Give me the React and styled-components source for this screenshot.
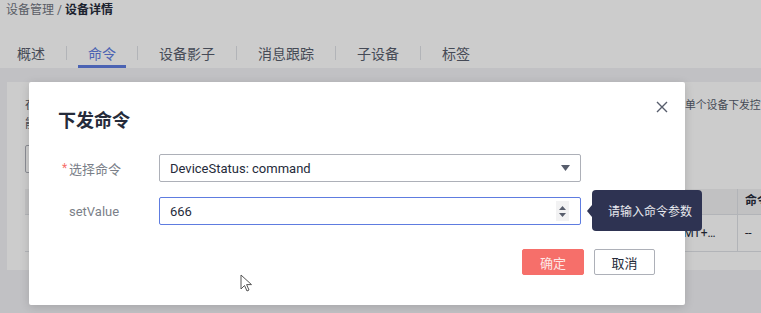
import React from 'react';
import styled, { createGlobalStyle } from 'styled-components';

const GlobalStyle = createGlobalStyle`
    html, body {
        margin: 0;
        padding: 0;
        background: #f2f2f5;
        font-family: Roboto, "Noto Sans CJK SC", sans-serif;
        color: #252b3a;
        overflow: hidden;
    }
`;

const tabs = ['概述', '命令', '设备影子', '消息跟踪', '子设备', '标签'];

const Page = styled.div`
    width: 761px;
    height: 313px;
    position: relative;
    overflow: hidden;
`;

const Header = styled.div`
    background: #fff;
    height: 68px;
    display: flex;
    flex-direction: column;
    justify-content: space-between;
`;

const Breadcrumb = styled.div`
    padding: 3px 0 0 6px;
    font-size: 12px;
    line-height: 14px;
    color: #71757f;
    b {
        color: #252b3a;
        font-weight: 700;
    }
`;

const TabBar = styled.div`
    display: flex;
    align-items: center;
    padding-left: 7px;
    height: 34px;
`;

const Tab = styled.div`
    height: 34px;
    box-sizing: border-box;
    padding: 6px 10px 0;
    display: flex;
    align-items: center;
    font-size: 14px;
    color: ${({ active }) => (active ? '#5e7ce0' : '#575d6c')};
    border-bottom: 3px solid ${({ active }) => (active ? '#5e7ce0' : 'transparent')};
`;

const TabSep = styled.span`
    width: 1px;
    height: 14px;
    margin: 3px 11px 0;
    background: #dfe1e6;
`;

const Content = styled.div`
    padding: 14px 0 0 7px;
`;

const Card = styled.div`
    background: #fff;
    width: 800px;
    height: 188px;
    box-sizing: border-box;
    padding: 14px 0 0 18px;
`;

const Desc = styled.div`
    display: flex;
    font-size: 12px;
    line-height: 19px;
    color: #575d6c;
    white-space: nowrap;
    overflow: hidden;
`;

const DescLead = styled.span`
    flex: 0 0 660px;
    overflow: hidden;
`;

const DescTail = styled.span`
    font-size: 10.8px;
`;

const OutlineBtn = styled.div`
    margin-top: 11px;
    width: 90px;
    height: 26px;
    border: 1px solid #adb0b8;
    border-radius: 2px;
`;

const Table = styled.div`
    margin-top: 16px;
    width: 780px;
    font-size: 12px;
`;

const TRow = styled.div`
    display: grid;
    grid-template-columns: 650px 62px 1fr;
    height: ${({ head }) => (head ? '25px' : '36px')};
    align-items: center;
    background: ${({ head }) => (head ? '#f2f2f3' : '#fff')};
    border-bottom: 1px solid #dfe1e6;
    font-weight: ${({ head }) => (head ? 700 : 400)};
    color: #252b3a;
`;

const TCell = styled.div`
    height: 100%;
    min-width: 0;
    box-sizing: border-box;
    line-height: ${({ head }) => (head ? '25px' : '36px')};
    padding-left: ${({ sep }) => (sep ? '7px' : '0')};
    padding-right: ${({ clip }) => (clip ? '16px' : '0')};
    border-left: ${({ sep }) => (sep ? '1px solid #dfe1e6' : 'none')};
    overflow: hidden;
    text-overflow: ${({ clip }) => (clip ? 'ellipsis' : 'clip')};
    white-space: nowrap;
`;

const Mask = styled.div`
    position: absolute;
    inset: 0;
    background: rgba(0, 0, 0, 0.2);
`;

const Modal = styled.div`
    position: absolute;
    left: 29px;
    top: 82px;
    width: 656px;
    height: 223px;
    box-sizing: border-box;
    background: #fff;
    border-radius: 2px;
    box-shadow: 0 2px 10px rgba(0, 0, 0, 0.15);
    padding: 27px 30px 0 30px;
    display: flex;
    flex-direction: column;
`;

const TitleRow = styled.div`
    display: flex;
    justify-content: space-between;
    align-items: flex-start;
`;

const Title = styled.h2`
    margin: 0 0 0 -1px;
    font-size: 18px;
    line-height: 24px;
    font-weight: 700;
    color: #252b3a;
`;

const Close = styled.div`
    margin: -8px -13px 0 0;
    width: 12px;
    height: 12px;
    display: flex;
`;

const Form = styled.div`
    margin-top: 21px;
    display: flex;
    flex-direction: column;
    gap: 15px;
`;

const FormRow = styled.div`
    display: flex;
    align-items: center;
    height: 28px;
`;

const Label = styled.label`
    width: 100px;
    box-sizing: border-box;
    padding-left: 10px;
    font-size: 13px;
    color: #7b7f89;
    display: flex;
    align-items: center;
`;

const Star = styled.span`
    color: #f66f6a;
    margin-left: -7px;
    width: 7px;
    font-size: 12px;
`;

const Field = styled.div`
    width: 422px;
    height: 28px;
    box-sizing: border-box;
    border: 1px solid ${({ focus }) => (focus ? '#5e7ce0' : '#adb0b8')};
    border-radius: 2px;
    display: flex;
    align-items: center;
    justify-content: space-between;
    padding: 0 10px;
    font-size: 13px;
    color: #252b3a;
    position: relative;
`;

const Spinner = styled.div`
    width: 13px;
    height: 20px;
    margin-right: 1px;
    background: #f2f2f3;
    display: flex;
    align-items: center;
    justify-content: center;
`;

const Tooltip = styled.div`
    position: absolute;
    left: 432px;
    top: -8px;
    width: 110px;
    height: 41px;
    box-sizing: border-box;
    background: #2e3352;
    border-radius: 4px;
    color: #e8e9ee;
    font-size: 12px;
    display: flex;
    align-items: center;
    padding-left: 16px;
    white-space: nowrap;
    &::before {
        content: '';
        position: absolute;
        left: -5px;
        top: 15px;
        border-top: 6px solid transparent;
        border-bottom: 6px solid transparent;
        border-right: 5px solid #2e3352;
    }
`;

const Footer = styled.div`
    margin-top: 24px;
    display: flex;
    justify-content: flex-end;
    gap: 10px;
`;

const Button = styled.button`
    width: ${({ primary }) => (primary ? '62px' : '61px')};
    height: 26px;
    border-radius: 2px;
    font-family: inherit;
    font-size: 13px;
    padding: 0;
    cursor: pointer;
    background: ${({ primary }) => (primary ? '#f66f6a' : '#fff')};
    color: ${({ primary }) => (primary ? '#fde7e6' : '#252b3a')};
    border: 1px solid ${({ primary }) => (primary ? '#f66f6a' : '#adb0b8')};
`;

const Cursor = styled.svg`
    position: absolute;
    left: 240px;
    top: 274px;
`;

export default function App() {
    return (
        <Page>
            <GlobalStyle />
            <Header>
                <Breadcrumb>
                    设备管理 / <b>设备详情</b>
                </Breadcrumb>
                <TabBar>
                    {tabs.map((t, i) => (
                        <React.Fragment key={t}>
                            {i > 0 && <TabSep />}
                            <Tab active={t === '命令'}>{t}</Tab>
                        </React.Fragment>
                    ))}
                </TabBar>
            </Header>
            <Content>
                <Card>
                    <Desc>
                        <DescLead>在设备详情页面可以对单个设备进行命令下发，命令下发方式分为同步命令与异步命令，</DescLead>
                        <DescTail>单个设备下发控</DescTail>
                    </Desc>
                    <Desc>
                        <DescLead>能力</DescLead>
                    </Desc>
                    <OutlineBtn />
                    <Table>
                        <TRow head>
                            <TCell head />
                            <TCell head />
                            <TCell head sep>命令</TCell>
                        </TRow>
                        <TRow>
                            <TCell />
                            <TCell clip>GMT+08:00</TCell>
                            <TCell sep>--</TCell>
                        </TRow>
                    </Table>
                </Card>
            </Content>
            <Mask />
            <Modal>
                <TitleRow>
                    <Title>下发命令</Title>
                    <Close>
                        <svg width="12" height="12" viewBox="0 0 12 12">
                            <path d="M1 1 L11 11 M11 1 L1 11" stroke="#575d6c" strokeWidth="1.4" />
                        </svg>
                    </Close>
                </TitleRow>
                <Form>
                    <FormRow>
                        <Label>
                            <Star>*</Star>选择命令
                        </Label>
                        <Field>
                            <span>DeviceStatus: command</span>
                            <svg width="9" height="6" viewBox="0 0 9 6">
                                <path d="M0 0 H9 L4.5 6 Z" fill="#575d6c" />
                            </svg>
                        </Field>
                    </FormRow>
                    <FormRow>
                        <Label>setValue</Label>
                        <Field focus>
                            <span>666</span>
                            <Spinner>
                                <svg width="7" height="11" viewBox="0 0 7 11">
                                    <path d="M0 4 L3.5 0 L7 4 Z M0 7 L7 7 L3.5 11 Z" fill="#575d6c" />
                                </svg>
                            </Spinner>
                            <Tooltip>请输入命令参数</Tooltip>
                        </Field>
                    </FormRow>
                </Form>
                <Footer>
                    <Button primary>确定</Button>
                    <Button>取消</Button>
                </Footer>
            </Modal>
            <Cursor width="14" height="19" viewBox="0 0 14 19">
                <path d="M1 1 L1 15 L4.5 11.5 L7 17 L9 16 L6.6 10.6 L11.5 10.6 Z" fill="#fff" stroke="#555" strokeWidth="1" strokeLinejoin="round" />
            </Cursor>
        </Page>
    );
}
